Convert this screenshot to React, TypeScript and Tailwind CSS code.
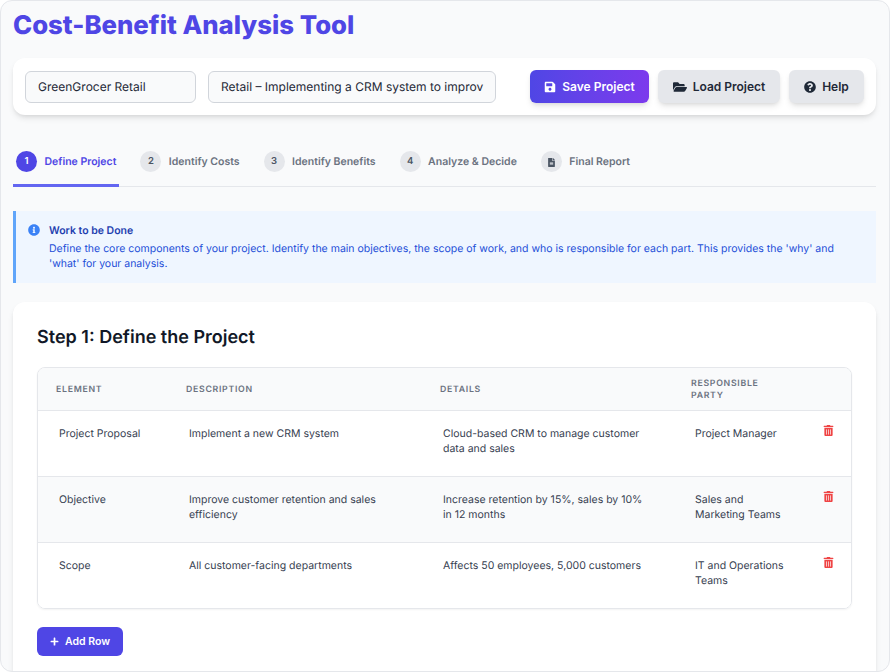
import { FaSave, FaFolderOpen, FaQuestionCircle, FaInfoCircle, FaFileAlt, FaTrashAlt, FaPlus } from "react-icons/fa";

const tabs = [
  { n: "1", label: "Define Project", active: true },
  { n: "2", label: "Identify Costs" },
  { n: "3", label: "Identify Benefits" },
  { n: "4", label: "Analyze & Decide" },
  { n: "", label: "Final Report" },
];

const rows = [
  ["Project Proposal", "Implement a new CRM system", "Cloud-based CRM to manage customer data and sales", "Project Manager"],
  ["Objective", "Improve customer retention and sales efficiency", "Increase retention by 15%, sales by 10% in 12 months", "Sales and Marketing Teams"],
  ["Scope", "All customer-facing departments", "Affects 50 employees, 5,000 customers", "IT and Operations Teams"],
];

export default function App() {
  return (
    <div className="h-[672px] w-[890px] overflow-hidden rounded-xl border border-[#e5e7eb] bg-[#f9fafb] pl-3 pr-[13px] pt-[7px] font-['Inter',sans-serif] text-[#1f2937] [text-rendering:geometricPrecision]">
      <h1 className="text-[25.75px] leading-[36px] font-extrabold text-[#4f46e5]">Cost-Benefit Analysis Tool</h1>

      <div className="mt-[14px] flex h-[57px] items-center rounded-xl bg-white pl-3 pr-3 shadow-md">
        <div className="flex h-8 w-[171px] items-center rounded-md border border-[#d1d5db] bg-[#f9fafb] px-3 pt-px text-[12px] text-[#1f2937]">GreenGrocer Retail</div>
        <div className="ml-3 flex h-8 w-[288px] items-center overflow-hidden whitespace-nowrap rounded-md border border-[#d1d5db] bg-[#f9fafb] px-3 pt-px text-[12px] text-[#1f2937]">Retail – Implementing a CRM system to improv</div>
        <button className="ml-[34px] flex h-[33px] w-[119px] items-center justify-center gap-[6px] rounded-md bg-gradient-to-r from-[#4f46e5] to-[#7c3aed] pt-px text-[12px] font-semibold text-white shadow-md">
          <FaSave className="size-[12px]" />Save Project
        </button>
        <button className="ml-[9px] flex h-[33px] w-[122px] items-center justify-center gap-[6px] rounded-md bg-[#e5e7eb] pt-px text-[12px] font-semibold text-[#1f2937] shadow-md">
          <FaFolderOpen className="size-[14px]" />Load Project
        </button>
        <button className="ml-[9px] flex h-[33px] w-[75px] items-center justify-center gap-[6px] rounded-md bg-[#e5e7eb] pt-px text-[12px] font-semibold text-[#1f2937] shadow-md">
          <FaQuestionCircle className="size-[12px]" />Help
        </button>
      </div>

      <div className="mt-[29px] flex h-[43px] gap-[18px] border-b border-[#e5e7eb]">
        {tabs.map((t) => (
          <div key={t.label} className={`-mb-px flex h-[43px] items-center gap-[7.5px] border-b-[3px] px-[3px] pb-[5px] ${t.active ? "border-[#6366f1] text-[#4f46e5]" : "border-transparent text-[#6b7280]"}`}>
            <span className={`flex size-[21px] items-center justify-center rounded-full pt-px text-[9.5px] font-semibold ${t.active ? "bg-[#4f46e5] text-white" : "bg-[#e5e7eb] text-[#4b5563]"}`}>
              {t.n || <FaFileAlt className="size-[9px]" />}
            </span>
            <span className="text-[10.5px] font-semibold">{t.label}</span>
          </div>
        ))}
      </div>

      <div className="mt-[24px] flex h-[72px] gap-[9px] border-l-[3px] border-[#60a5fa] bg-[#eff6ff] pl-3 pr-3 pt-[12px]">
        <FaInfoCircle className="mt-[1px] size-[12px] shrink-0 text-[#3b82f6]" />
        <div className="text-[10.5px] leading-[15px]">
          <p className="font-semibold text-[#1e40af]">Work to be Done</p>
          <p className="mt-[3px] text-[#1d4ed8]">Define the core components of your project. Identify the main objectives, the scope of work, and who is responsible for each part. This provides the 'why' and 'what' for your analysis.</p>
        </div>
      </div>

      <div className="mt-[19px] h-[400px] rounded-xl bg-white px-6 pt-6 shadow-md">
        <h2 className="pt-px text-[18px] leading-[22px] font-semibold text-[#111827]">Step 1: Define the Project</h2>
        <div className="mt-[18px] w-[815px] overflow-hidden rounded-lg border border-[#e5e7eb] shadow-xs">
          <table className="w-full table-fixed border-collapse">
            <colgroup>
              <col className="w-[130px]" />
              <col className="w-[254px]" />
              <col className="w-[251px]" />
              <col className="w-[134px]" />
              <col />
            </colgroup>
            <thead>
              <tr className="h-[42px] border-b border-[#e5e7eb] bg-[#f9fafb] text-left text-[8.75px] leading-[12px] font-semibold tracking-[0.7px] text-[#6b7280] uppercase">
                <th className="pl-[18px] pt-[2px] font-semibold">Element</th>
                <th className="pl-[18px] pt-[2px] font-semibold">Description</th>
                <th className="pl-[18px] pt-[2px] font-semibold">Details</th>
                <th className="pl-[18px] pr-6 pt-[2px] font-semibold">Responsible Party</th>
                <th />
              </tr>
            </thead>
            <tbody className="text-[10.5px] leading-[15px] text-[#374151]">
              {rows.map((r, i) => (
                <tr key={r[0]} className={`h-[66px] align-top ${i === 1 ? "bg-[#f9fafb]" : "bg-white"} ${i < 2 ? "border-b border-[#e5e7eb]" : ""}`}>
                  <td className="pl-[21px] pt-[15px]">{r[0]}</td>
                  <td className="pl-[21px] pr-[30px] pt-[15px]">{r[1]}</td>
                  <td className="pl-[21px] pr-[30px] pt-[15px]">{r[2]}</td>
                  <td className="pl-[22px] pr-[17px] pt-[15px]">{r[3]}</td>
                  <td className="pl-[16px] pt-[14px]"><FaTrashAlt className="size-[11px] text-[#ef4444]" /></td>
                </tr>
              ))}
            </tbody>
          </table>
        </div>
        <button className="mt-[18px] flex h-[29px] w-[86px] items-center justify-center gap-[6px] rounded-md bg-[#4f46e5] text-[10.5px] font-semibold text-white">
          <FaPlus className="size-[9px]" />Add Row
        </button>
      </div>
    </div>
  );
}
